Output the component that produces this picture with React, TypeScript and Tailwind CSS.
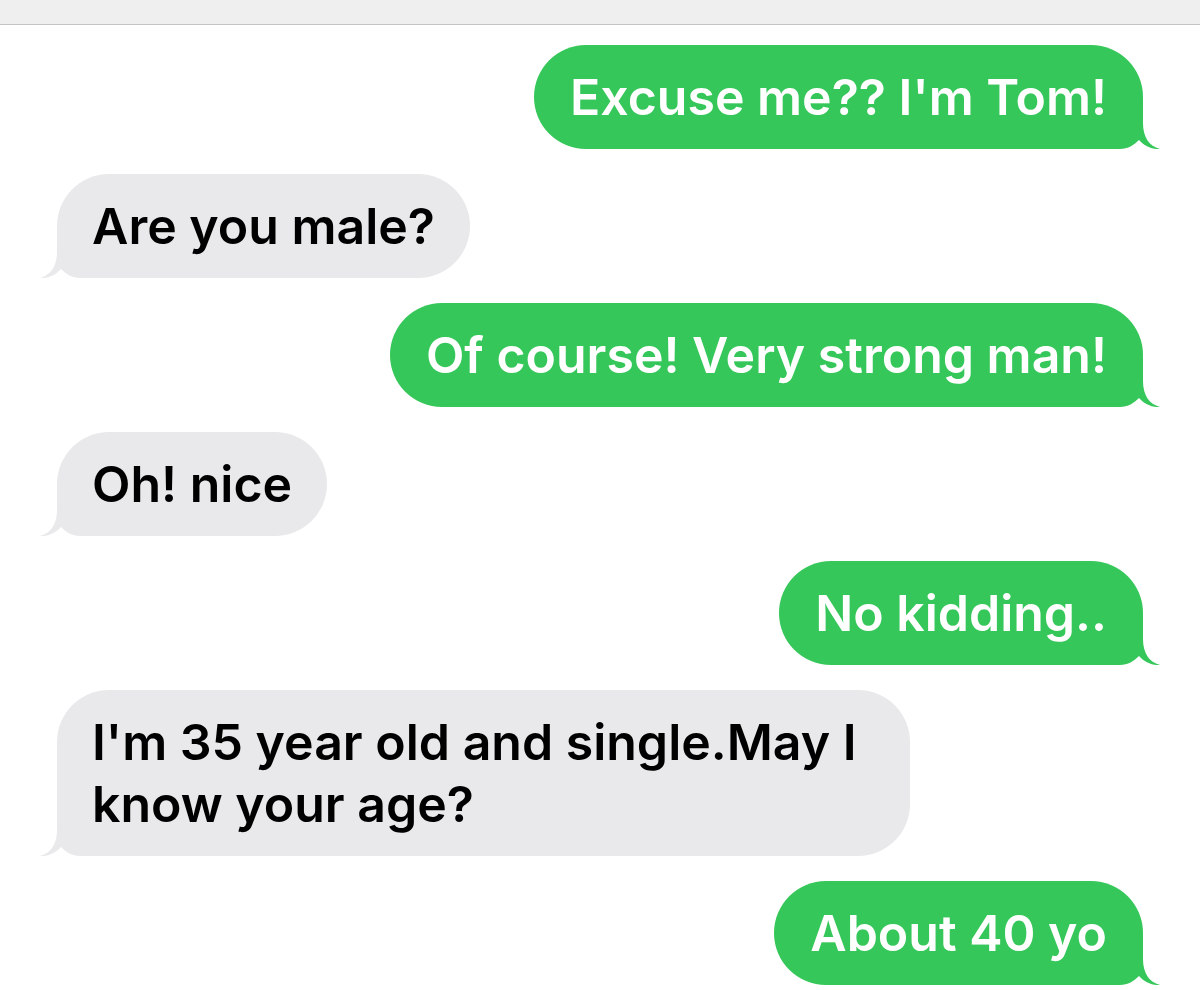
import React from 'react';

type Msg = { text: string; me: boolean };

const messages: Msg[] = [
  { text: "Excuse me?? I'm Tom!", me: true },
  { text: 'Are you male?', me: false },
  { text: 'Of course! Very strong man!', me: true },
  { text: 'Oh! nice', me: false },
  { text: 'No kidding..', me: true },
  { text: "I'm 35 year old and single.May I know your age?", me: false },
  { text: 'About 40 yo', me: true },
];

// bubble tail + squared corner, drawn for the right side; flipped for incoming
const Tail = ({ me }: { me: boolean }) => (
  <svg
    viewBox="0 0 67 50"
    className={
      me
        ? 'absolute -right-[17px] bottom-0 w-[67px] h-[50px] fill-[#35c759]'
        : 'absolute -left-[17px] bottom-0 w-[67px] h-[50px] fill-[#e9e9eb] -scale-x-100'
    }
  >
    <path d="M0 0 L50 0 L50 24 C50 38 56 47 67 50 C59 50.5 51 47 46 41 C41 46 35 50 27 50 L0 50 Z" />
  </svg>
);

const Bubble = ({ msg }: { msg: Msg }) => (
  <div className={msg.me ? 'flex justify-end' : 'flex justify-start'}>
    <div
      className={
        msg.me
          ? 'relative max-w-[853px] rounded-[52px] bg-[#35c759] text-white px-[36px] py-[21px]'
          : 'relative max-w-[853px] rounded-[52px] bg-[#e9e9eb] text-black px-[35px] py-[21px]'
      }
    >
      <Tail me={msg.me} />
      <p className="relative text-[50px] leading-[62px] font-semibold">{msg.text}</p>
    </div>
  </div>
);

export default function App() {
  return (
    <div className="w-[1200px] h-[990px] overflow-hidden bg-white font-['Inter','Liberation_Sans',sans-serif]">
      <div className="h-[25px] bg-[#efeff0] border-b border-[#c4c4c6]" />
      <div className="flex flex-col gap-[25px] px-[57px] pt-[20px]">
        {messages.map((m, i) => (
          <Bubble key={i} msg={m} />
        ))}
      </div>
    </div>
  );
}
